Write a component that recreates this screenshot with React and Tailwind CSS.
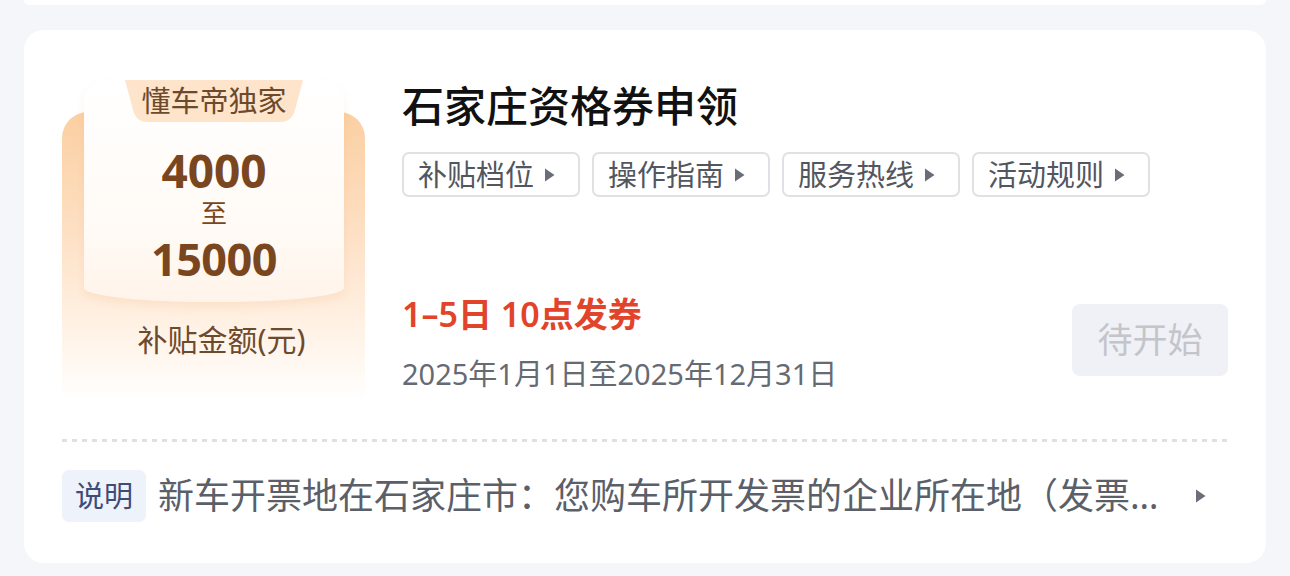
import React from 'react'

const FONT = { fontFamily: '"Noto Sans", "Noto Sans CJK SC", sans-serif' }

function Caret({ className = '' }) {
  return (
    <svg className={className} width="11" height="14" viewBox="0 0 11 14">
      <path d="M1 0.5L10.5 7L1 13.5Z" fill="currentColor" />
    </svg>
  )
}

const tags = ['补贴档位', '操作指南', '服务热线', '活动规则']

function AmountBadge() {
  return (
    <div className="w-[303px] shrink-0 pt-[32px]">
      <div className="h-[288px] rounded-t-[26px] bg-[linear-gradient(180deg,#fbcfa2_0%,#fddfc2_40%,#fff0e2_72%,#ffffff_100%)] flex flex-col items-center">
        {/* white card */}
        <div className="-mt-[32px] ml-[1px] w-[260px] h-[222px] rounded-t-[22px] rounded-b-[130px_14px] bg-[linear-gradient(180deg,#ffffff_0%,#fffaf5_70%,#fff4ea_100%)] shadow-[0_5px_8px_rgba(240,180,120,0.18)] flex flex-col items-center">
          <div className="relative w-[178px] h-[42px] flex items-center justify-center">
            <svg className="absolute inset-0" width="178" height="42" viewBox="0 0 178 42">
              <path d="M0 0H178L170 30Q167 42 155 42H23Q11 42 8 30Z" fill="#fde4cb" />
            </svg>
            <span className="relative text-[29px] leading-none text-[#6e4a2c] -mt-[2px]">懂车帝独家</span>
          </div>
          <div className="mt-[24px] text-[46px] font-bold leading-[48px] text-[#7a4620]">4000</div>
          <div className="mt-[4px] text-[26px] leading-[30px] text-[#7a4620]">至</div>
          <div className="mt-[7px] text-[45px] font-bold leading-[48px] text-[#7a4620] tracking-[-0.5px]">15000</div>
        </div>
        <div className="mt-[18px] pl-[16px] text-[30px] leading-[40px] text-[#6e4a2c]">补贴金额(元)</div>
      </div>
    </div>
  )
}

export default function App() {
  return (
    <div className="min-h-[576px] bg-[#f5f6fa] px-[24px]" style={FONT}>
      <div className="h-[5px] bg-white rounded-b-[20px]" />
      <div className="mt-[25px] w-[1242px] bg-white rounded-[20px] px-[38px] pt-[50px] pb-[41px]">
        <div className="flex">
          <AmountBadge />
          <div className="ml-[37px] flex-1 flex flex-col">
            <h1 className="text-[42px] leading-[56px] font-medium text-[#111111] -mt-[2px]">石家庄资格券申领</h1>
            <div className="mt-[18px] flex gap-[12px]">
              {tags.map((t) => (
                <div
                  key={t}
                  className="h-[45px] flex items-center pl-[14px] pr-[23px] border-2 border-[#e0e1e5] rounded-[7px] text-[#52565f]"
                >
                  <span className="text-[29px] leading-none">{t}</span>
                  <Caret className="ml-[10px] text-[#696d77]" />
                </div>
              ))}
            </div>
            <div className="mt-[95px] flex items-end justify-between">
              <div>
                <div className="text-[34px] leading-[44px] font-semibold text-[#e1442b]">1–5日 10点发券</div>
                <div className="mt-[20px] text-[29px] leading-[36px] text-[#666a73]">2025年1月1日至2025年12月31日</div>
              </div>
              <button className="mb-[16px] w-[156px] h-[72px] rounded-[8px] bg-[#f0f1f6] text-[35px] text-[#c3c5cb]">
                待开始
              </button>
            </div>
          </div>
        </div>

        <div className="mt-[39px] h-[3px] bg-[repeating-linear-gradient(90deg,#dfe0e6_0px,#dfe0e6_5px,transparent_5px,transparent_10px)]" />

        <div className="mt-[28px] flex items-center">
          <span className="shrink-0 h-[52px] px-[13px] rounded-[7px] bg-[#eef2fb] text-[29px] leading-[52px] text-[#3e4c78]">说明</span>
          <span className="ml-[12px] flex-1 min-w-0 truncate text-[36px] leading-[48px] text-[#5b5f69]">
            新车开票地在石家庄市：您购车所开发票的企业所在地（发票上所写的销售单位地址）需在石家庄市
          </span>
          <Caret className="ml-[24px] mr-[22px] text-[#6a6e78]" />
        </div>
      </div>
    </div>
  )
}
